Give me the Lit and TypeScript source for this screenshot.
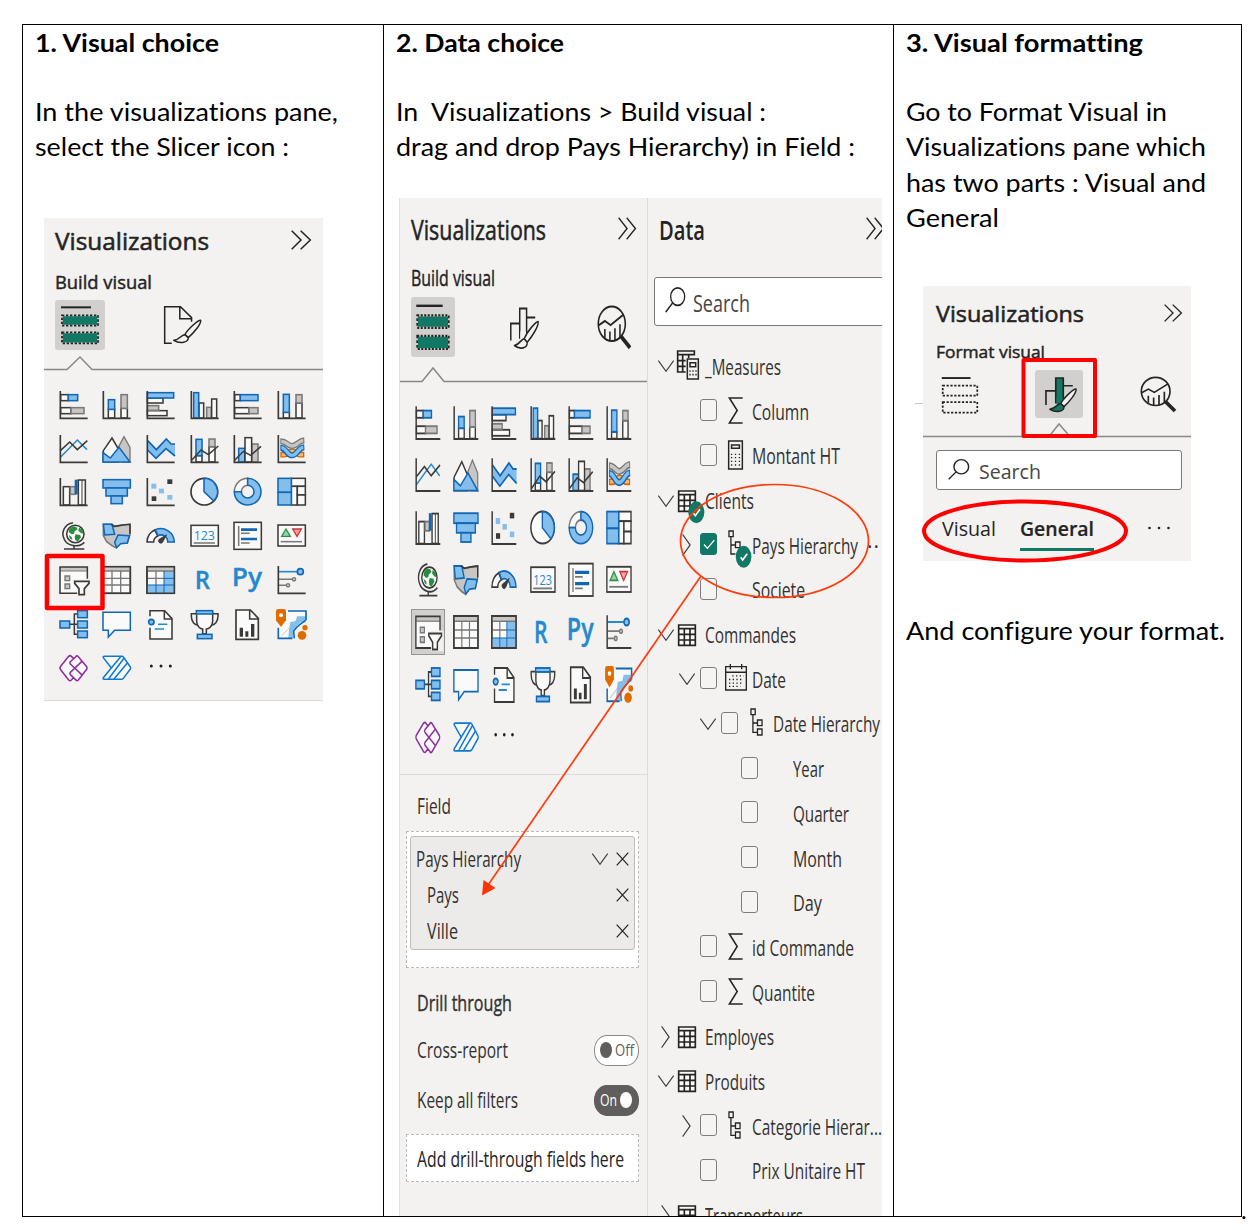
import { LitElement, html, css, svg, SVGTemplateResult, TemplateResult } from "lit";
import { customElement, property } from "lit/decorators.js";

/* Text run squeezed or stretched horizontally to a known width. */
@customElement("fit-text")
class FitText extends LitElement {
  @property({ type: Number }) w = 0;
  @property() text = "";
  static styles = css`
    :host { display: block; flex: none; white-space: pre; }
    .run { display: inline-block; transform-origin: 0 50%; }
  `;
  firstUpdated() {
    const run = this.renderRoot.querySelector(".run") as HTMLElement;
    const natural = run.getBoundingClientRect().width;
    this.style.width = `${this.w}px`;
    if (natural > 0) run.style.transform = `scaleX(${this.w / natural})`;
  }
  render() {
    return html`<span class="run">${this.text}</span>`;
  }
}

const t = (text: string, w: number, cls = "") => html`<fit-text class=${cls} .w=${w} .text=${text}></fit-text>`;

const K = "#3b3a39", BF = "#83beec", BS = "#1267b4", GF = "#c8c6c4", GS = "#7a7876", W = "#fafafa";
const box = (x: number, y: number, x2: number, y2: number, f: string, s: string) =>
  svg`<rect x=${x} y=${y} width=${x2 - x} height=${y2 - y} fill=${f} stroke=${s} stroke-width="4.6"/>`;
const wb = (x: number, y: number, x2: number, y2: number) => box(x, y, x2, y2, W, K);
const bb = (x: number, y: number, x2: number, y2: number) => box(x, y, x2, y2, BF, BS);
const gb = (x: number, y: number, x2: number, y2: number) => box(x, y, x2, y2, GF, GS);
const ln = (d: string, s = K, w = 4.6, f = "none") => svg`<path d=${d} fill=${f} stroke=${s} stroke-width=${w}/>`;
const axis = ln("M4 3V85H86", K, 5);

const icons: SVGTemplateResult[] = [
  svg`${wb(5, 14, 28, 32)}${bb(28, 14, 56, 32)}${wb(5, 53, 36, 71)}${gb(36, 53, 75, 71)}${axis}`,
  svg`${wb(19, 58, 38, 84)}${bb(19, 29, 38, 58)}${wb(57, 55, 76, 84)}${gb(57, 14, 76, 55)}${axis}`,
  svg`${wb(4, 24, 51, 39)}${bb(4, 8, 83, 24)}${wb(4, 62, 63, 77)}${gb(4, 47, 38, 61)}${axis}`,
  svg`${wb(27, 39, 41, 84)}${bb(11, 8, 26, 84)}${gb(50, 52, 64, 84)}${wb(65, 27, 80, 84)}${axis}`,
  svg`${wb(5, 14, 22, 32)}${bb(22, 14, 75, 32)}${wb(5, 53, 48, 71)}${gb(48, 53, 75, 71)}${axis}`,
  svg`${wb(19, 67, 37, 84)}${bb(19, 13, 37, 67)}${wb(57, 39, 75, 84)}${gb(57, 14, 75, 39)}${axis}`,

  svg`${ln("M5 69 55 18 84 47", "#2589cc")}${ln("M5 49 32 24 55 47 85 20")}${axis}`,
  svg`${ln("M50 38 66 8 84 40V84H60Z", GS, 4, GF)}${ln("M4 84V50L30 12 58 60 50 84Z", K, 4.6, W)}${ln("M3 56 25 72 51 40 84 84H3Z", BS, 4.6, BF)}`,
  svg`<path d="M5 20 31 47 61 15 75 30H87V66L60 44 30 73 5 48Z" fill=${BF}/>${ln("M5 20 31 47 61 15 75 30H87", BS, 5)}${ln("M5 48 30 73 60 44 87 66", BS, 5)}${axis}`,
  svg`${wb(18, 65, 36, 84)}${bb(18, 16, 36, 65)}${wb(57, 38, 75, 84)}${gb(57, 15, 75, 38)}${ln("M5 79 33 48 55 62 85 36")}${axis}`,
  svg`${bb(17, 43, 36, 84)}${gb(56, 30, 75, 84)}${wb(36, 11, 56, 84)}${ln("M5 79 31 52 53 64 84 37")}${axis}`,
  svg`${ln("M10 62H22C34 62 34 52 46 52S58 62 70 62H82", "#cf6a0c", 17)}${ln("M14 62H22C34 62 34 52 46 52S58 62 70 62H78", "#f7b873", 9)}
    ${ln("M10 22C30 22 32 36 45 36S66 20 82 19", GS, 18)}${ln("M13 22C30 22 32 36 45 36S66 20 79 19", GF, 10)}
    ${ln("M10 41C28 41 30 64 45 64S64 41 82 40", BS, 18)}${ln("M13 41C28 41 30 64 45 64S64 41 79 40", BF, 10)}${axis}`,

  svg`${wb(13, 29, 32, 84)}${gb(34, 29, 49, 52)}<rect x="47" y="8" width="9" height="44" fill=${BS}/>${wb(58, 9, 79, 84)}${ln("M69 9V84", K, 3)}${axis}`,
  svg`${bb(3, 8, 85, 33)}${bb(12, 33, 76, 57)}${bb(27, 57, 61, 80)}`,
  svg`<g fill=${BF}><rect x="16" y="20" width="15" height="15"/><rect x="39" y="35" width="15" height="14"/><rect x="64" y="54" width="15" height="14"/></g><g fill=${K}><rect x="64" y="7" width="15" height="14"/><rect x="17" y="58" width="14" height="14"/></g>${axis}`,
  svg`<circle cx="43" cy="44" r="40" fill=${W} stroke=${K} stroke-width="5"/>${ln("M42 4A40 40 0 0 1 71 72L42 44Z", BS, 4.6, BF)}`,
  svg`${ln("M4 44A40 40 0 0 1 44 4V25A19 19 0 0 0 25 44Z", GS, 4.6, W)}${ln("M44 4A40 40 0 1 1 4 44H25A19 19 0 1 0 44 25Z", BS, 4.6, BF)}`,
  svg`${wb(43, 4, 85, 28)}${wb(43, 28, 61, 84)}${wb(61, 28, 85, 54)}${wb(61, 54, 85, 84)}${bb(3, 4, 43, 46)}${bb(3, 46, 43, 84)}`,

  svg`<circle cx="49" cy="39" r="26" fill=${W} stroke=${K} stroke-width="4.6"/>
    <path d="M31 24 41 16 52 18 56 25 47 31 45 38 38 40 29 33ZM60 20 70 26 73 38 66 36 58 29ZM50 40 63 42 66 49 57 61 49 58 47 48ZM29 42 38 48 40 56 33 53Z" fill="#2a8c3e"/>
    ${ln("M42 5C17 9 6 33 15 53 24 75 58 82 76 64")}${ln("M45 74V84M15 84H76")}`,
  svg`${ln("M4 10H28L38 16 62 12 84 10V40L76 66 66 62 52 66 42 80 30 74 14 62 4 44Z", GS, 4.6, GF)}${ln("M4 10H30L38 40 8 42Z", BS, 4.6, BF)}${ln("M48 42 82 44 76 66 56 68 44 80 38 64Z", BS, 4.6, BF)}${ln("M28 10 38 16 62 12 84 10V38", K)}`,
  svg`${ln("M3 63A41 41 0 0 1 26 27L35 45A20 20 0 0 0 23 63Z", K, 4.6, W)}${ln("M28 26A41 41 0 0 1 85 63H65A20 20 0 0 0 36 44Z", BS, 4.6, BF)}${ln("M62 41 50 64A7 7 0 1 1 39 55Z", K, 2, K)}`,
  svg`${wb(3, 13, 85, 75)}<text x="11" y="57" font-family="Open Sans, sans-serif" font-size="37" textLength="64" lengthAdjust="spacingAndGlyphs" fill="#2589cc">123</text>${ln("M11 66H75", GS)}`,
  svg`${wb(3, 4, 85, 85)}${ln("M17 15V75", GS)}${ln("M24 26H72M24 54H72", BS, 8)}${ln("M24 37H50M24 66H50", GS)}`,
  svg`${wb(3, 12, 85, 75)}${ln("M14 46 27 24 40 46Z", "#2f9146", 4, "#9ad29f")}${ln("M47 24H73L60 46Z", "#d13438", 4, "#f1a6a6")}${ln("M11 62H75", GS)}`,

  svg`<path d="M3 6H85V86H3Z" fill=${W}/><path d="M3 6H85V18H3Z" fill=${GF}/>${ln("M5 18H83", GS, 3)}${ln("M85 41V6H3V85H56")}${ln("M18 33H32V47H18ZM18 57H32V71H18Z", GS, 4, GF)}
    <path d="M40 42H97V93H55V70Z" fill="#f3f2f1"/>${ln("M47 49H90V55L76 71V89H60V71L47 55Z", K, 5, W)}`,
  svg`${wb(3, 5, 85, 85)}<path d="M5 7H83V17H5Z" fill=${GF}/><path d="M5 18H83M5 40H83M5 60H83M30 18V84M56 18V84" stroke=${GS} stroke-width="4"/>${ln("M3 5H85V85H3Z")}`,
  svg`${wb(3, 5, 85, 85)}<path d="M5 7H83V17H5Z" fill=${GF}/><path d="M54 18H84V84H4V60H54Z" fill=${BF}/>${ln("M5 18H83M5 40H54M30 18V60", GS, 4)}${ln("M54 18V84M30 60V84M4 60H84M54 40H84", BS, 3)}${ln("M3 5H85V85H3Z")}`,
  svg`<text x="14" y="72" font-family="Open Sans, sans-serif" font-weight="600" font-size="75" textLength="46" lengthAdjust="spacingAndGlyphs" fill="#2589cc" stroke="#2589cc">R</text>`,
  svg`<text x="-4" y="64" font-family="Open Sans, sans-serif" font-weight="600" font-size="76" textLength="91" lengthAdjust="spacingAndGlyphs" fill="#2589cc" stroke="#2589cc">Py</text>`,
  svg`${ln("M5 20H60", "#2589cc", 5)}<circle cx="70" cy="20" r="9" fill=${BF} stroke=${BS} stroke-width="5"/>${ln("M5 43H45M5 61H27", GS)}<circle cx="51" cy="43" r="5" fill=${GF} stroke=${GS} stroke-width="4"/><circle cx="33" cy="61" r="5" fill=${GF} stroke=${GS} stroke-width="4"/>${axis}`,

  svg`${ln("M33 46H56M56 15H46V76H56")}${bb(3, 36, 32, 57)}${bb(56, 5, 85, 26)}${bb(56, 36, 85, 57)}${bb(56, 66, 85, 86)}`,
  svg`${ln("M3 10H85V64H38L19 84V64H3Z", BS, 4.6, W)}`,
  svg`<path d="M12 5H56L78 28V90H12Z" fill=${W}/>${ln("M12 22V5H56L78 29V90H12V56")}${ln("M55 5V30H78")}<circle cx="16" cy="39" r="8" fill=${BF} stroke=${BS} stroke-width="5"/>${ln("M36 46H64M26 60H54", "#2589cc")}`,
  svg`${ln("M20 14H4V22C4 38 14 48 24 48M66 14H84V22C84 38 74 48 64 48", K)}${ln("M20 12H68V36C68 52 56 60 49 60V74H38V60C31 60 20 52 20 36Z", K, 4.6, W)}${bb(19, 5, 68, 15)}${bb(22, 76, 66, 89)}`,
  svg`${ln("M9 3H52L76 28V91H9Z", K, 5, W)}${ln("M50 3V30H76")}<path d="M20 56H30V83H20ZM37 67H46V83H37ZM54 45H64V83H54Z" fill=${K}/>`,
  svg`<path d="M3 5H87V88H3Z" fill=${W}/><path d="M36 62 40 40 56 36 60 22H86V46L58 88H34Z" fill=${BF}/><path d="M48 92 50 62 70 40H95V92Z" fill="#f3f2f1"/>
    ${ln("M33 6H87V34M4 56V88H46", BS, 5)}${ln("M86 34 72 44 60 54 50 66 52 88", BS, 4.6)}${ln("M14 80 30 64 38 56", GF, 3)}
    <path d="M-3 6Q-3 0 4 0H20Q27 0 27 6V34L12 54-3 34Z" fill="#e06c00"/><circle cx="12" cy="19" r="6" fill=${W}/><circle cx="84" cy="56" r="8" fill="#e06c00"/><circle cx="75" cy="79" r="13" fill="#e06c00"/>`,

  svg`<path d="M33 10 54 10 85 47 54 88H33L3 48Z" fill=${W}/>${ln("M44 20 37 13Q33 9 29 13L4 44Q2 48 4 52L29 84Q33 88 37 84L44 77M53 86 34 68Q31 64 34 61L68 29M53 12 34 29Q31 33 34 36L68 68M50 14Q54 9 58 14L83 44Q85 48 83 52L58 84Q54 89 50 84", "#8f2da0")}`,
  svg`${ln("M4 17Q2 13 8 13H60Q63 13 65 16L85 45Q87 48 85 51L64 79Q62 82 58 82H7Q1 82 4 77L28 48Z", "#0f78d4", 4.6, W)}${ln("M56 14 28 48M66 19 20 80M76 33 36 81", "#0f78d4", 4.6)}`,
  svg`<g fill="#201f1e"><circle cx="16" cy="42" r="4.5"/><circle cx="45" cy="42" r="4.5"/><circle cx="73" cy="42" r="4.5"/></g>`,
];

const pic = (cls: string, vb: string, body: SVGTemplateResult) =>
  html`<svg class=${cls} viewBox=${vb} preserveAspectRatio="none">${body}</svg>`;

const iconGrid = (selected: number) =>
  html`<div class="grid">${icons.map((i, n) => html`<div class="cell ${n === selected ? "sel" : ""}">${pic("ico", "0 0 87 87", i)}</div>`)}</div>`;

const D = "#252423", GREEN = "#117865";
const buildIcon = (fill: string, base: string) => svg`
  <path d="M18 22H108" stroke=${D} stroke-width="6"/>
  <path d="M21 46H129V77H21ZM21 97H129V130H21Z" fill=${fill} stroke=${base} stroke-width="5"/>
  <path d="M21 46H129V77H21ZM21 97H129V130H21Z" fill="none" stroke=${D} stroke-width="5.5" stroke-dasharray="7 5"/>`;
const brush = (x: number, y: number, f: string) => svg`<g transform="translate(${x} ${y})" stroke=${D} stroke-width="4.5" stroke-linejoin="round">
  <path d="M98 39C90 38 60 65 51 82L61 91C78 76 100 50 98 39Z" fill="#f3f2f1"/><path d="M51 82C40 82 38 96 18 99 38 111 62 105 61 91Z" fill=${f}/></g>`;
const formatIcon = (bar: string, tip: string) => svg`
  <path d="M36 82V6H59V68" fill=${bar} stroke=${D} stroke-width="5"/><path d="M6 86V44H34M59 29H88" fill="none" stroke=${D} stroke-width="5"/>
  <path d="M38 64H57V70L48 84H38Z" fill=${bar}/>${brush(0, 0, tip)}`;
const pageIcon = svg`<path d="M26 115H5V5H52L85 38V50M50 5V41H85" fill="none" stroke=${D} stroke-width="4.5"/>${brush(14, 7, "#f3f2f1")}`;
const analyticsIcon = svg`<g fill="none" stroke=${D} stroke-width="5"><circle cx="47" cy="47" r="43"/>
  <path d="M5 51 25 40 43 50 84 24M25 60V82M41 66V89M57 58V89M73 48V82"/><path d="M76 78 105 107" stroke-width="11"/></g>`;
const chev2 = svg`<path d="M2 2 29 30 2 58M28 2 56 30 28 58" fill="none" stroke=${D} stroke-width="4.4"/>`;
const magn = svg`<circle cx="38" cy="23" r="21" fill="none" stroke=${D} stroke-width="4"/><path d="M23 38 2 60" stroke=${D} stroke-width="4"/>`;
const xIcon = svg`<path d="M2 2 36 40M36 2 2 40" stroke=${D} stroke-width="3.5"/>`;
const chevDown = svg`<path d="M1 2 24 33 47 2" fill="none" stroke="#3b3a39" stroke-width="3.4"/>`;
const chevRight = svg`<path d="M2 1 27 32 2 63" fill="none" stroke="#3b3a39" stroke-width="3.7"/>`;
const badge = (cx: number, cy: number) => svg`<ellipse cx=${cx} cy=${cy} rx="24" ry="33" fill=${GREEN}/><path d="M${cx - 9} ${cy + 2} ${cx - 3} ${cy + 10} ${cx + 11} ${cy - 9}" fill="none" stroke="#fff" stroke-width="5"/>`;
const tableBody = svg`<path d="M2 2H52V64H2Z" fill="#faf9f8"/><path d="M2 3H52V64H2ZM2 14H52M2 31H52M2 48H52M19 14V64M36 14V64" fill="none" stroke=${D} stroke-width="5"/>`;

const kinds: Record<string, TemplateResult> = {
  table: pic("k-table", "0 0 54 66", tableBody),
  tableOn: pic("k-table", "0 0 54 66", svg`${tableBody}${badge(55, 67)}`),
  measures: pic("k-meas", "0 0 66 90", svg`<path d="M2 3H52V14H2ZM2 14V66H26M2 32H26M2 49H26M17 14V66M35 14V24" fill="none" stroke=${D} stroke-width="5"/><path d="M31 27H64V87H31Z" fill="#f3f2f1" stroke=${D} stroke-width="4.5"/><path d="M39 38H56V50H39Z" fill="none" stroke=${D} stroke-width="4.5"/><path d="M37 63H60M37 74H60" stroke=${D} stroke-width="5" stroke-dasharray="4 5"/>`),
  sum: pic("k-sum", "0 0 44 80", svg`<path d="M43 3H4L27 40 4 77H43" fill="none" stroke=${D} stroke-width="4.5"/>`),
  calc: pic("k-calc", "0 0 46 90", svg`<path d="M2 3H44V87H2ZM11 15H35V25H11Z" fill="none" stroke=${D} stroke-width="4.5"/><path d="M9 43H38M9 53H38M9 64H38M9 75H38" stroke=${D} stroke-width="4" stroke-dasharray="4 8"/>`),
  cal: pic("k-cal", "0 0 66 82", svg`<path d="M2 8H64V79H2ZM2 25H64M16 0V16M50 0V16" fill="none" stroke=${D} stroke-width="4"/><path d="M22 36H56M12 47H56M12 58H56M12 68H46" stroke=${D} stroke-width="4" stroke-dasharray="4 7"/>`),
  hier: pic("k-hier", "0 0 40 84", svg`<path d="M3 3H16V20H3ZM23 36H37V53H23ZM23 63H37V81H23ZM9 20V73H23M9 45H23" fill="none" stroke=${D} stroke-width="4"/>`),
  hierOn: pic("k-hier", "0 0 40 84", svg`<path d="M3 3H16V20H3ZM23 36H37V53H23ZM9 20V72H23M9 45H23" fill="none" stroke=${D} stroke-width="4"/>${badge(48, 80)}`),
  none: html``,
};

type Row = [level: number, arrow: string, kind: string, label: string, width: number, on?: boolean];
const rows: Row[] = [
  [1, "d", "measures", "_Measures", 76],
  [2, "", "sum", "Column", 57],
  [2, "", "calc", "Montant HT", 88],
  [1, "d", "tableOn", "Clients", 49],
  [2, "r", "hierOn", "Pays Hierarchy", 106, true],
  [2, "", "none", "Societe", 53],
  [1, "d", "table", "Commandes", 91],
  [2, "d", "cal", "Date", 34],
  [3, "d", "hier", "Date Hierarchy", 107],
  [4, "", "none", "Year", 31],
  [4, "", "none", "Quarter", 56],
  [4, "", "none", "Month", 49],
  [4, "", "none", "Day", 29],
  [2, "", "sum", "id Commande", 102],
  [2, "", "sum", "Quantite", 63],
  [1, "r", "table", "Employes", 69],
  [1, "d", "table", "Produits", 60],
  [2, "r", "hier", "Categorie Hierar...", 130],
  [2, "", "none", "Prix Unitaire HT", 113],
  [1, "r", "table", "Transporteurs", 98],
];

const treeRow = ([lvl, arrow, kind, label, w, on]: Row) => html`
  <div class="row l${lvl}">
    <span class="arrow">${arrow === "d" ? pic("a-d", "0 0 48 35", chevDown) : arrow === "r" ? pic("a-r", "0 0 30 64", chevRight) : ""}</span>
    ${lvl > 1 ? html`<span class="check ${on ? "on" : ""}">${on ? pic("tick", "0 0 48 66", svg`<path d="M9 33 19 45 40 19" fill="none" stroke="#fff" stroke-width="4"/>`) : ""}</span>` : ""}
    <span class="kind">${kinds[kind]}</span>
    ${t(label, w, "lbl")}
    ${on ? html`<span class="more">··</span>` : ""}
  </div>`;

@customElement("app-root")
class AppRoot extends LitElement {
  static styles = css`
    :host { display: block; width: 1250px; height: 1230px; background: #fff; overflow: hidden; font-family: "Open Sans", "Noto Sans", sans-serif; color: #252423; }
    * { box-sizing: border-box; }
    svg { display: block; overflow: visible; flex: none; }
    .page { display: flex; padding: 24px 0 0 22px; height: 1230px; align-items: flex-start; }
    .doc { display: grid; grid-template-columns: 361px 510px 347px; width: 1220px; height: 1193px; border: 1px solid #000; flex: none; }
    .col { border-right: 1px solid #000; overflow: hidden; height: 1191px; }
    .col:last-child { border-right: 0; }
    .dot { margin: 1168px 0 0 -1px; font: 24px/35px Lato, sans-serif; color: #000; }
    .word { font: 25px/35.2px Lato, "Liberation Sans", sans-serif; font-variant-ligatures: none; color: #000; padding: 0 0 0 12px; }
    .word .h { font-weight: 700; margin-bottom: 34px; }
    .pane { position: relative; background: #f3f2f1; }
    .title { display: flex; align-items: center; justify-content: space-between; -webkit-text-stroke: 0.55px currentColor; }
    .title svg { -webkit-text-stroke: 0; }
    .sub { display: flex; align-items: center; -webkit-text-stroke: 0.45px currentColor; }
    .tabs { display: flex; }
    .tab { flex: none; border-radius: 3px; display: flex; }
    .tab.on { background: #d2d0ce; }
    .grid { display: grid; }
    .over { position: absolute; left: 0; top: 0; pointer-events: none; }

    .p1 { width: 279px; height: 483px; margin: 53px 0 0 21px; border-bottom: 1px solid #dddbd9; }
    .p1 .title { height: 46px; padding: 0 12px 0 11px; font-size: 23.5px; }
    .p1 .chev { width: 20px; height: 20px; margin-top: -2px; }
    .p1 .sub { height: 36px; padding: 1px 0 0 11px; font-size: 18px; }
    .p1 .tabs { padding-left: 11px; gap: 58px; height: 50px; align-items: center; }
    .p1 .b50 { width: 50px; height: 50px; }
    .p1 .pg { width: 39px; height: 40px; }
    .p1 .rule { width: 279px; height: 22px; margin-top: -0.5px; }
    .p1 .grid { padding: 18.8px 0 0 14.8px; grid-template-columns: repeat(6, 29px); grid-auto-rows: 29px; gap: 14.75px 14.65px; }
    .p1 .ico { width: 29px; height: 29px; }

    .mid { display: flex; width: 483px; height: 1018px; margin: 33px 0 0 15px; overflow: hidden; position: relative; border-left: 1px solid #e3e1df; }
    .viz { width: 248px; height: 1018px; border-right: 1px solid #dddbd9; flex: none; }
    .viz .title { height: 64px; padding: 0 11px; font-size: 27.5px; }
    .mid .chev { width: 18px; height: 23px; margin-top: -2px; }
    .viz .sub { height: 31px; margin-bottom: 2px; padding-left: 11px; font-size: 22px; }
    .viz .tabs { margin-top: 4px; padding-left: 11px; height: 60px; align-items: center; }
    .viz .b50 { width: 44px; height: 60px; }
    .viz .fm { width: 31px; height: 44px; margin: 2px 0 0 54px; }
    .viz .an { width: 34px; height: 44px; margin: 1px 0 0 57px; }
    .viz .rule { width: 247px; height: 26px; }
    .viz .grid { padding: 22.6px 0 0 14.6px; grid-template-columns: repeat(6, 25.6px); grid-auto-rows: 34.8px; gap: 17.4px 12.75px; }
    .viz .ico { width: 25.6px; height: 34.8px; position: relative; }
    .viz .sel { background: #d2d0ce; outline: 1.5px solid #979593; margin: -4px -4px -5px -3px; padding: 4px 4px 5px 3px; }
    .wells { border-top: 1px solid #dddbd9; margin-top: 21px; font-size: 21px; color: #323130; }
    .wells .fl { padding: 17px 0 0 17px; line-height: 28px; height: 56px; }
    .drop { margin-left: 6px; width: 233px; height: 137px; border: 1.5px dashed #bdbbb9; background: #fff; padding: 4px 3px; }
    .card { height: 114px; border: 1.5px solid #bebbb8; border-radius: 3px; background: #edebe9; padding: 4px 5px 0 5px; }
    .item { display: flex; align-items: center; height: 36px; }
    .item fit-text + * { margin-left: auto; }
    .item.child { padding-left: 11px; }
    .item .dn { width: 16px; height: 12px; margin-right: 8px; }
    .item .x { width: 13px; height: 14px; }
    .drill { padding: 20px 0 0 17px; line-height: 30px; -webkit-text-stroke: 0.4px currentColor; }
    .opt { display: flex; align-items: center; justify-content: space-between; height: 50px; padding: 0 8px 0 17px; }
    .opts { padding-top: 7px; }
    .tog { display: flex; align-items: center; width: 45px; height: 31px; border-radius: 13px / 15px; border: 1.5px solid #8a8886; background: #fff; font-size: 16px; padding: 0 5px; gap: 3px; color: #605e5c; }
    .tog.on { background: #605e5c; border-color: #605e5c; color: #fff; }
    .knob { width: 12px; height: 16px; border-radius: 50%; background: #605e5c; flex: none; }
    .on .knob { background: #fff; }
    .add { margin: 9px 0 0 6px; width: 233px; height: 48px; border: 1.5px dashed #bdbbb9; background: #fff; display: flex; align-items: center; padding: 1px 0 0 10px; color: #252423; }

    .data { width: 340px; height: 1018px; flex: none; background: #f3f2f1; }
    .data .title { height: 64px; justify-content: flex-start; padding-left: 11px; font-size: 27px; font-weight: 600; -webkit-text-stroke: 0; }
    .data .title .chev { margin-left: 161px; }
    .search { display: flex; align-items: center; background: #fff; border: 1.5px solid #7a7876; color: #484644; }
    .data .search { margin: 15px 0 0 6px; width: 320px; height: 49px; border-radius: 3px; font-size: 24px; padding: 3px 0 0 10px; }
    .data .mg { width: 20px; height: 26px; margin: -5px 8px 0 0; }
    .tree { padding-top: 19px; font-size: 21px; color: #323130; }
    .row { display: flex; align-items: center; height: 44.7px; }
    .l1 { padding-left: 9px; } .l2 { padding-left: 30px; } .l3 { padding-left: 51px; } .l4 { padding-left: 71px; }
    .arrow { width: 17px; height: 28px; display: flex; align-items: center; justify-content: center; flex: none; }
    .a-d { width: 16px; height: 12px; margin-top: -1px; } .a-r { width: 9px; height: 22px; margin-top: -1px; }
    .check { width: 17px; height: 22px; border: 1.3px solid #7f7d7b; border-radius: 3px; margin: -3px 0 0 5px; flex: none; background: #f5f4f3; }
    .check.on { background: #117865; border-color: #117865; }
    .tick { width: 16px; height: 21px; }
    .kind { width: 30.5px; display: flex; align-items: center; padding-left: 4px; flex: none; }
    .l2 .kind { width: 35px; padding-left: 11px; }
    .l3 .kind { width: 34.5px; padding-left: 12px; }
    .l4 .kind { width: 35px; }
    .k-table { width: 18px; height: 22px; margin-top: -1px; } .k-meas { width: 22px; height: 30px; margin: -3px 0 0 -1px; }
    .k-sum { width: 15px; height: 27px; margin-top: -2px; } .k-calc { width: 15px; height: 30px; margin-top: -3px; }
    .k-cal { width: 22px; height: 27px; margin: -4px 0 0 -3px; } .k-hier { width: 13px; height: 28px; margin-top: -4px; }
    .more { margin-left: 9px; letter-spacing: 1px; }

    .strip { display: flex; margin: 51px 0 0 21px; width: 276px; }
    .stub { width: 8px; height: 118px; border-bottom: 1px solid #c8c6c4; flex: none; }
    .p3 { width: 268px; height: 275px; }
    .p3 .title { height: 53px; padding: 0 9px 0 13px; font-size: 22px; }
    .p3 .chev { width: 18px; height: 18px; }
    .p3 .sub { height: 24px; padding-left: 13px; font-size: 16.5px; }
    .p3 .tabs { height: 49px; margin-top: 6px; padding-left: 13px; align-items: center; }
    .p3 .b50 { width: 48px; height: 48px; margin-top: 2px; }
    .p3 .tab.on { width: 48px; height: 48px; margin-left: 51px; padding: 6px 0 0 9px; }
    .p3 .fm { width: 34px; height: 37px; } .p3 .an { width: 36px; height: 36px; margin-left: 57px; }
    .p3 .rule { width: 268px; height: 20px; }
    .p3 .search { margin: 12px 9px 0 13px; height: 40px; border-radius: 3px; font-size: 20px; padding: 2px 0 0 11px; }
    .p3 .mg { width: 21px; height: 21px; margin: -4px 10px 0 0; }
    .switch { display: flex; height: 62px; padding: 20px 0 0 19px; font-size: 20px; line-height: 38px; }
    .switch .act { border-bottom: 3px solid #117865; height: 41px; margin-left: 24px; font-weight: 600; -webkit-text-stroke: 0.2px currentColor; }
    .dots { width: 24px; height: 6px; margin: 15px 0 0 53px; }
    .after { padding-top: 52px; }
  `;

  rule(w: number, h: number, x1: number, xm: number, x2: number) {
    return html`<svg class="rule" viewBox="0 0 ${w} ${h}"><path d="M0 ${h - 1.5}H${x1}L${xm} ${h - 14 - (h > 24 ? 1 : 0)} ${x2} ${h - 1.5}H${w}" fill="none" stroke="#8a8886" stroke-width="1.5"/></svg>`;
  }

  render() {
    return html`<div class="page"><div class="doc">
      <div class="col">
        <div class="word">${t("1. Visual choice", 184, "h")}${t("In the visualizations pane,", 303)}${t("select the Slicer icon :", 254)}</div>
        <div class="pane p1">
          <div class="title">${t("Visualizations", 154)}${pic("chev", "0 0 58 60", chev2)}</div>
          <div class="sub">${t("Build visual", 97)}</div>
          <div class="tabs"><div class="tab on">${pic("b50", "0 0 150 150", buildIcon(GREEN, "#d2d0ce"))}</div>${pic("pg", "0 0 116 120", pageIcon)}</div>
          ${this.rule(279, 22, 23, 36, 48)}
          ${iconGrid(-1)}
          <svg class="over" width="279" height="483"><rect x="3" y="338" width="55.5" height="52" fill="none" stroke="#fe0000" stroke-width="4.5" stroke-linejoin="round"/></svg>
        </div>
      </div>
      <div class="col">
        <div class="word">${t("2. Data choice", 168, "h")}${t("In  Visualizations > Build visual :", 370)}${t("drag and drop Pays Hierarchy) in Field :", 459)}</div>
        <div class="mid">
          <div class="pane viz">
            <div class="title">${t("Visualizations", 135)}${pic("chev", "0 0 58 60", chev2)}</div>
            <div class="sub">${t("Build visual", 84)}</div>
            <div class="tabs"><div class="tab on">${pic("b50", "0 0 150 150", buildIcon(GREEN, "#d2d0ce"))}</div>${pic("fm", "0 0 104 110", formatIcon("#f3f2f1", "#f3f2f1"))}${pic("an", "0 0 108 110", analyticsIcon)}</div>
            ${this.rule(247, 26, 22, 33, 44)}
            ${iconGrid(24)}
            <div class="wells">
              <div class="fl">${t("Field", 34)}</div>
              <div class="drop"><div class="card">
                <div class="item">${t("Pays Hierarchy", 105)}${pic("dn", "0 0 48 35", chevDown)}${pic("x", "0 0 38 42", xIcon)}</div>
                <div class="item child">${t("Pays", 32)}${pic("x", "0 0 38 42", xIcon)}</div>
                <div class="item child">${t("Ville", 31)}${pic("x", "0 0 38 42", xIcon)}</div>
              </div></div>
              <div class="drill">${t("Drill through", 95)}</div>
              <div class="opts">
                <div class="opt">${t("Cross-report", 91)}<div class="tog"><span class="knob"></span>${t("Off", 19)}</div></div>
                <div class="opt">${t("Keep all filters", 101)}<div class="tog on">${t("On", 17)}<span class="knob"></span></div></div>
              </div>
              <div class="add">${t("Add drill-through fields here", 207)}</div>
            </div>
          </div>
          <div class="data">
            <div class="title">${t("Data", 46)}${pic("chev", "0 0 58 60", chev2)}</div>
            <div class="search">${pic("mg", "0 0 60 62", magn)}${t("Search", 57)}</div>
            <div class="tree">${rows.map(treeRow)}</div>
          </div>
          <svg class="over" width="483" height="1018"><ellipse cx="374.5" cy="343" rx="94" ry="56.5" fill="none" stroke="#ff3b0a" stroke-width="1.7"/>
            <path d="M301 378 86 690" stroke="#ff3b0a" stroke-width="1.7"/><path d="M82 697.500 83.500 682 95.500 690Z" fill="#ff3300"/></svg>
        </div>
      </div>
      <div class="col">
        <div class="word">${t("3. Visual formatting", 237, "h")}${t("Go to Format Visual in", 261)}${t("Visualizations pane which", 300)}${t("has two parts : Visual and", 300)}${t("General", 93)}</div>
        <div class="strip"><div class="stub"></div>
          <div class="pane p3">
            <div class="title">${t("Visualizations", 148)}${pic("chev", "0 0 58 60", chev2)}</div>
            <div class="sub">${t("Format visual", 109)}</div>
            <div class="tabs">${pic("b50", "0 0 150 150", buildIcon("none", "none"))}<div class="tab on">${pic("fm", "0 0 104 110", formatIcon(GREEN, GREEN))}</div>${pic("an", "0 0 108 110", analyticsIcon)}</div>
            ${this.rule(268, 20, 126, 136, 147)}
            <div class="search">${pic("mg", "0 0 60 62", magn)}${t("Search", 62)}</div>
            <div class="switch">${t("Visual", 54)}${t("General", 74, "act")}<svg class="dots" viewBox="0 0 24 6"><g fill="#252423"><circle cx="2.500" cy="3" r="1.300"/><circle cx="12" cy="3" r="1.300"/><circle cx="21.500" cy="3" r="1.300"/></g></svg></div>
            <svg class="over" width="268" height="275"><rect x="100.500" y="74" width="71.500" height="76" fill="none" stroke="#fe0000" stroke-width="4" stroke-linejoin="round"/>
              <ellipse cx="102" cy="245" rx="101" ry="29.500" fill="none" stroke="#fe0000" stroke-width="4"/></svg>
          </div>
        </div>
        <div class="word after">${t("And configure your format.", 319)}</div>
      </div>
    </div><span class="dot">.</span></div>`;
  }
}
